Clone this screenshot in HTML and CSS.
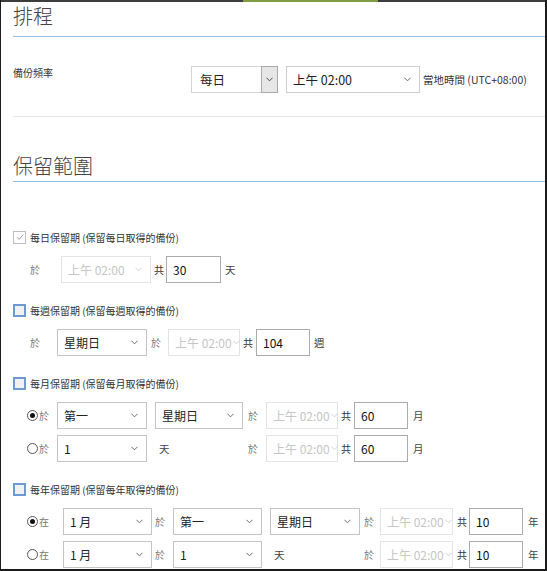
FILE: index.html
```html
<!DOCTYPE html>
<html lang="zh-Hant">
<head>
<meta charset="utf-8">
<title>排程</title>
<link rel="stylesheet" href="styles.css">
</head>
<body>
<div class="frame">
  <div class="topbar"><span class="tb-a"></span><span class="tb-green"></span><span class="tb-b"></span></div>
  <div class="content">
    <h2 class="section-title first">排程</h2>
    <div class="freq-row">
      <span class="freq-label">備份頻率</span>
      <div class="select sel-freq"><span>每日</span><span class="sel-btn"><svg class="chev" viewBox="0 0 8 5" width="7" height="5"><path d="M.5.5 4 4 7.5.5" fill="none" stroke="currentColor" stroke-width="1.1"/></svg></span></div>
      <div class="select sel-time"><span>上午 02:00</span><svg class="chev" viewBox="0 0 8 5" width="7" height="5"><path d="M.5.5 4 4 7.5.5" fill="none" stroke="currentColor" stroke-width="1.1"/></svg></div>
      <span class="tz">當地時間 (UTC+08:00)</span>
    </div>
    <hr class="sep">
    <h2 class="section-title second">保留範圍</h2>

    <div class="ret">
      <div class="group">
        <div class="check-line"><span class="cb checked"><svg viewBox="0 0 10 10" width="10" height="10"><path d="M2 5.2 4.2 7.4 8.2 2.6" fill="none" stroke="currentColor" stroke-width="1"/></svg></span>每日保留期 (保留每日取得的備份)</div>
        <div class="row ind-a">
          <span class="kw pre-31">於</span>
          <div class="select dis w90"><span>上午 02:00</span><svg class="chev" viewBox="0 0 8 5" width="7" height="5"><path d="M.5.5 4 4 7.5.5" fill="none" stroke="currentColor" stroke-width="1.1"/></svg></div>
          <span class="kw dark kw-gong1">共</span>
          <div class="num w55">30</div>
          <span class="unit u4">天</span>
        </div>
      </div>

      <div class="group">
        <div class="check-line"><span class="cb"></span>每週保留期 (保留每週取得的備份)</div>
        <div class="row ind-a">
          <span class="kw pre-27">於</span>
          <div class="select w90"><span>星期日</span><svg class="chev" viewBox="0 0 8 5" width="7" height="5"><path d="M.5.5 4 4 7.5.5" fill="none" stroke="currentColor" stroke-width="1.1"/></svg></div>
          <span class="kw at-w">於</span>
          <div class="select dis tight w72"><span>上午 02:00</span><svg class="chev" viewBox="0 0 8 5" width="7" height="5"><path d="M.5.5 4 4 7.5.5" fill="none" stroke="currentColor" stroke-width="1.1"/></svg></div>
          <span class="kw dark gong">共</span>
          <div class="num w54">104</div>
          <span class="unit u4">週</span>
        </div>
      </div>

      <div class="group">
        <div class="check-line"><span class="cb"></span>每月保留期 (保留每月取得的備份)</div>
        <div class="row ind-b">
          <span class="opt w30"><span class="radio on"></span><span class="kw">於</span></span>
          <div class="select w90"><span>第一</span><svg class="chev" viewBox="0 0 8 5" width="7" height="5"><path d="M.5.5 4 4 7.5.5" fill="none" stroke="currentColor" stroke-width="1.1"/></svg></div>
          <div class="select w88 ml8"><span>星期日</span><svg class="chev" viewBox="0 0 8 5" width="7" height="5"><path d="M.5.5 4 4 7.5.5" fill="none" stroke="currentColor" stroke-width="1.1"/></svg></div>
          <span class="kw at-m">於</span>
          <div class="select dis tight w72"><span>上午 02:00</span><svg class="chev" viewBox="0 0 8 5" width="7" height="5"><path d="M.5.5 4 4 7.5.5" fill="none" stroke="currentColor" stroke-width="1.1"/></svg></div>
          <span class="kw dark gong">共</span>
          <div class="num w54">60</div>
          <span class="unit u5">月</span>
        </div>
        <div class="row ind-b">
          <span class="opt w30"><span class="radio"></span><span class="kw">於</span></span>
          <div class="select w90"><span>1</span><svg class="chev" viewBox="0 0 8 5" width="7" height="5"><path d="M.5.5 4 4 7.5.5" fill="none" stroke="currentColor" stroke-width="1.1"/></svg></div>
          <span class="unit fill w88 ml8">天</span>
          <span class="kw at-m">於</span>
          <div class="select dis tight w72"><span>上午 02:00</span><svg class="chev" viewBox="0 0 8 5" width="7" height="5"><path d="M.5.5 4 4 7.5.5" fill="none" stroke="currentColor" stroke-width="1.1"/></svg></div>
          <span class="kw dark gong">共</span>
          <div class="num w54">60</div>
          <span class="unit u5">月</span>
        </div>
      </div>

      <div class="group">
        <div class="check-line"><span class="cb"></span>每年保留期 (保留每年取得的備份)</div>
        <div class="row ind-b">
          <span class="opt w36"><span class="radio on"></span><span class="kw">在</span></span>
          <div class="select w89"><span>1&nbsp;月</span><svg class="chev" viewBox="0 0 8 5" width="7" height="5"><path d="M.5.5 4 4 7.5.5" fill="none" stroke="currentColor" stroke-width="1.1"/></svg></div>
          <span class="kw at-y1">於</span>
          <div class="select w89"><span>第一</span><svg class="chev" viewBox="0 0 8 5" width="7" height="5"><path d="M.5.5 4 4 7.5.5" fill="none" stroke="currentColor" stroke-width="1.1"/></svg></div>
          <div class="select w90 ml8"><span>星期日</span><svg class="chev" viewBox="0 0 8 5" width="7" height="5"><path d="M.5.5 4 4 7.5.5" fill="none" stroke="currentColor" stroke-width="1.1"/></svg></div>
          <span class="kw at-y2">於</span>
          <div class="select dis tight w73"><span>上午 02:00</span><svg class="chev" viewBox="0 0 8 5" width="7" height="5"><path d="M.5.5 4 4 7.5.5" fill="none" stroke="currentColor" stroke-width="1.1"/></svg></div>
          <span class="kw dark gong-y">共</span>
          <div class="num w54">10</div>
          <span class="unit u5">年</span>
        </div>
        <div class="row ind-b">
          <span class="opt w36"><span class="radio"></span><span class="kw">在</span></span>
          <div class="select w89"><span>1&nbsp;月</span><svg class="chev" viewBox="0 0 8 5" width="7" height="5"><path d="M.5.5 4 4 7.5.5" fill="none" stroke="currentColor" stroke-width="1.1"/></svg></div>
          <span class="kw at-y1">於</span>
          <div class="select w89"><span>1</span><svg class="chev" viewBox="0 0 8 5" width="7" height="5"><path d="M.5.5 4 4 7.5.5" fill="none" stroke="currentColor" stroke-width="1.1"/></svg></div>
          <span class="unit fill w90 ml8">天</span>
          <span class="kw at-y2">於</span>
          <div class="select dis tight w73"><span>上午 02:00</span><svg class="chev" viewBox="0 0 8 5" width="7" height="5"><path d="M.5.5 4 4 7.5.5" fill="none" stroke="currentColor" stroke-width="1.1"/></svg></div>
          <span class="kw dark gong-y">共</span>
          <div class="num w54">10</div>
          <span class="unit u5">年</span>
        </div>
      </div>
    </div>
  </div>
</div>
</body>
</html>
```

FILE: styles.css
```css
html, body {
  margin: 0;
  background: #fff;
}

body {
  font-family: "Noto Sans CJK TC", "Noto Sans", sans-serif;
  color: #333;
}

.frame {
  width: 547px;
  height: 571px;
  box-sizing: border-box;
  border-left: 1px solid #1c1c1c;
  border-right: 2px solid #1c1c1c;
  border-bottom: 2px solid #1c1c1c;
  overflow: hidden;
}

.topbar {
  display: flex;
  height: 2px;
}

.tb-a {
  width: 242px;
  background: #3d3d3d;
}

.tb-green {
  width: 135px;
  background: #7d9c43;
}

.tb-b {
  flex: 1;
  background: #3d3d3d;
}

.content {
  padding-left: 12px;
}

.section-title {
  margin: 0;
  font-size: 20px;
  font-weight: 300;
  line-height: 28px;
  color: #444;
  border-bottom: 1px solid #93bde5;
}

.section-title.first {
  padding-bottom: 6px;
}

.section-title.second {
  margin-top: 35px;
  padding-bottom: 1px;
}

.freq-row {
  display: flex;
  align-items: flex-start;
  margin-top: 29px;
}

.freq-label {
  width: 178px;
  flex-shrink: 0;
  font-size: 10px;
  line-height: 14px;
  color: #333;
}

.tz {
  align-self: center;
  margin-left: 3px;
  font-size: 10.5px;
  color: #333;
  white-space: nowrap;
}

.sep {
  margin: 23px 0 0;
  height: 0;
  border: 0;
  border-top: 1px solid #e4e4e4;
}

/* selects */
.select {
  display: flex;
  align-items: center;
  justify-content: space-between;
  flex-shrink: 0;
  box-sizing: border-box;
  height: 27px;
  padding: 0 8px 0 6px;
  border: 1px solid #c4c4c4;
  background: #fff;
  font-size: 12px;
  color: #222;
  white-space: nowrap;
}

.select .chev {
  color: #666;
  flex-shrink: 0;
}

.sel-freq {
  width: 87px;
  padding: 0 0 0 8px;
  border-color: #d4d4d4;
  font-size: 12.5px;
}

.sel-btn {
  display: flex;
  align-items: center;
  justify-content: center;
  align-self: stretch;
  width: 15px;
  margin: -1px -1px -1px 0;
  border: 1px solid #a9a9a9;
  background: #e6e6e6;
}

.sel-btn .chev {
  color: #444;
}

.sel-time {
  width: 134px;
  margin-left: 8px;
  font-size: 12.5px;
  border-color: #cfcfcf;
}

.select.dis {
  border-color: #e4e4e4;
  color: #c6c6c6;
}

.select.dis .chev {
  color: #cfcfcf;
}

.select.tight {
  justify-content: flex-start;
  padding: 0 0 0 6px;
}

.select.tight .chev {
  margin-left: 1px;
}

.num {
  display: flex;
  align-items: center;
  flex-shrink: 0;
  box-sizing: border-box;
  height: 27px;
  padding-left: 6px;
  border: 1px solid #ababab;
  font-size: 12px;
  color: #111;
}

.w30 { width: 30px; }
.w36 { width: 36px; }
.w54 { width: 54px; }
.w55 { width: 55px; }
.w72 { width: 72px; }
.w73 { width: 73px; }
.w88 { width: 88px; }
.w89 { width: 89px; }
.w90 { width: 90px; }
.ml8 { margin-left: 8px; }

/* retention */
.ret {
  padding-top: 48px;
}

.group + .group {
  margin-top: 20px;
}

.check-line {
  display: flex;
  align-items: center;
  height: 14px;
  font-size: 10px;
  color: #333;
  white-space: nowrap;
}

.cb {
  display: flex;
  align-items: center;
  justify-content: center;
  flex-shrink: 0;
  box-sizing: border-box;
  width: 13px;
  height: 13px;
  margin-right: 4px;
  border: 2px solid #6f9ad0;
  background: #f1f1f1;
}

.cb.checked {
  border: 1px solid #bdbdbd;
  background: #fff;
  color: #9a9a9a;
}

.row {
  display: flex;
  align-items: center;
  height: 27px;
  margin-top: 12px;
}

.row + .row {
  margin-top: 6px;
}

.ind-a {
  padding-left: 17px;
}

.ind-b {
  padding-left: 14px;
}

.kw {
  flex-shrink: 0;
  width: 10px;
  font-size: 10px;
  line-height: 14px;
  color: #777;
}

.kw.dark {
  color: #333;
}

.pre-31 { margin-right: 21px; }
.pre-27 { margin-right: 17px; }
.kw-gong1 { margin: 0 2px 0 3px; }
.at-w { margin: 0 7px 0 4px; }
.gong { margin: 0 3px; }
.at-m { margin: 0 8px 0 5px; }
.at-y1 { margin: 0 8px 0 3px; }
.at-y2 { margin: 0 6px 0 4px; }
.gong-y { margin: 0 2px 0 4px; }

.unit {
  flex-shrink: 0;
  font-size: 10.5px;
  color: #444;
}

.u4 { margin-left: 4px; }
.u5 { margin-left: 5px; }

.unit.fill {
  box-sizing: border-box;
  padding-left: 4px;
}

.opt {
  display: flex;
  align-items: center;
  flex-shrink: 0;
}

.radio {
  position: relative;
  box-sizing: border-box;
  width: 11px;
  height: 11px;
  margin-right: 1px;
  border: 1px solid #555;
  border-radius: 50%;
  background: #fff;
}

.radio.on::after {
  content: "";
  position: absolute;
  left: 2px;
  top: 2px;
  width: 5px;
  height: 5px;
  border-radius: 50%;
  background: #111;
}
```
